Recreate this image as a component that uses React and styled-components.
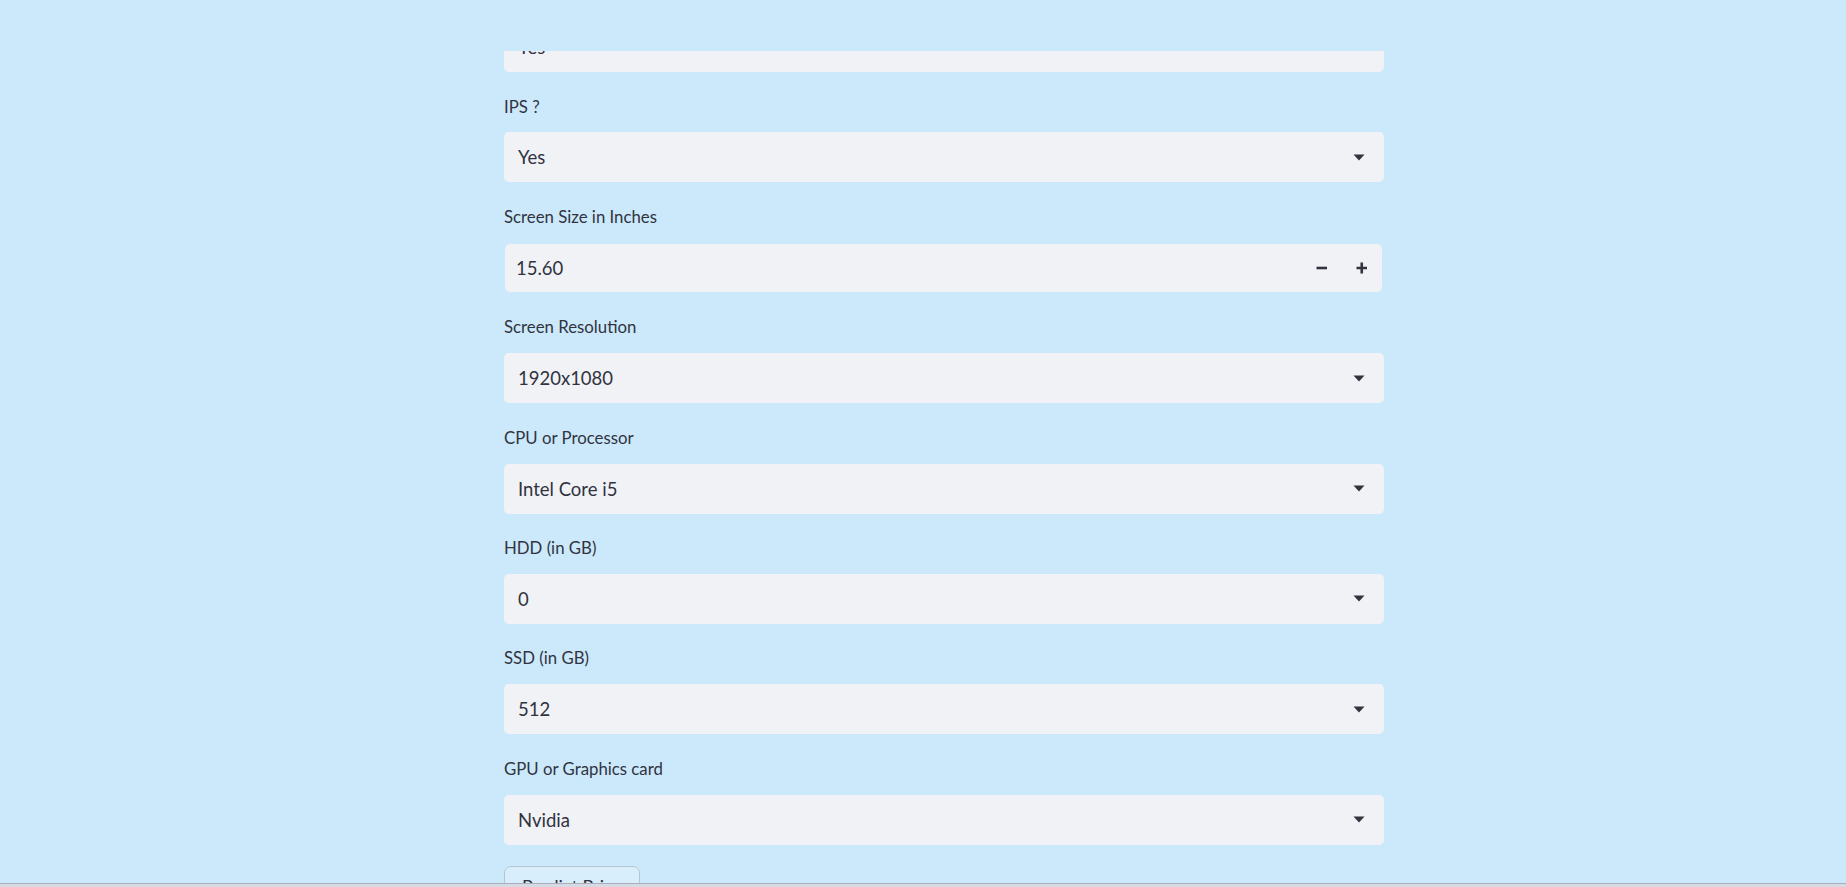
import React from "react";
import styled, { createGlobalStyle } from "styled-components";

const GlobalStyle = createGlobalStyle`
  html, body {
    margin: 0;
    padding: 0;
    height: 100%;
    overflow: hidden;
    background: #cbe9fb;
  }
  body {
    font-family: Lato, "Open Sans", "Liberation Sans", sans-serif;
    color: #31333f;
  }
`;

const fields = [
  { label: "IPS ?", value: "Yes" },
  { label: "Screen Size in Inches", value: "15.60", number: true },
  { label: "Screen Resolution", value: "1920x1080" },
  { label: "CPU or Processor", value: "Intel Core i5" },
  { label: "HDD (in GB)", value: "0" },
  { label: "SSD (in GB)", value: "512" },
  { label: "GPU or Graphics card", value: "Nvidia" },
];

function Caret() {
  return (
    <svg width="12" height="7" viewBox="0 0 12 7">
      <path d="M0.5 0.5 H11.5 L6 6.5 Z" fill="#31333f" />
    </svg>
  );
}

function MinusIcon() {
  return (
    <svg width="12" height="12" viewBox="0 0 12 12">
      <path d="M0.5 6 H11" stroke="#31333f" strokeWidth="2.6" />
    </svg>
  );
}

function PlusIcon() {
  return (
    <svg width="12" height="12" viewBox="0 0 12 12">
      <path d="M0.5 6 H11 M5.75 0.5 V11.5" stroke="#31333f" strokeWidth="2.6" />
    </svg>
  );
}

function SelectBox({ value }) {
  return (
    <Select>
      <SelectValue>{value}</SelectValue>
      <CaretSlot>
        <Caret />
      </CaretSlot>
    </Select>
  );
}

function NumberInput({ value }) {
  return (
    <NumberOuter>
      <NumberBox>
        <NumberValue>{value}</NumberValue>
        <StepButton>
          <MinusIcon />
        </StepButton>
        <StepButton>
          <PlusIcon />
        </StepButton>
      </NumberBox>
    </NumberOuter>
  );
}

export default function App() {
  return (
    <>
      <GlobalStyle />
      <Header />
      <Main>
        <Column>
          <SelectBox value="Yes" />
          {fields.map((f) => (
            <Widget key={f.label}>
              <Label>{f.label}</Label>
              {f.number ? (
                <NumberInput value={f.value} />
              ) : (
                <SelectBox value={f.value} />
              )}
            </Widget>
          ))}
          <PredictButton>Predict Price</PredictButton>
        </Column>
      </Main>
      <WindowEdge />
    </>
  );
}

const Header = styled.header`
  position: fixed;
  top: 0;
  left: 0;
  right: 0;
  height: 51px;
  background: #cbe9fb;
  z-index: 10;
`;

const Main = styled.main`
  height: 100vh;
  overflow: hidden;
  display: flex;
  align-items: flex-start;
  justify-content: center;
  padding-left: 42px;
  box-sizing: border-box;
`;

const Column = styled.div`
  width: 880px;
  flex-shrink: 0;
  padding-top: 22px;
  display: flex;
  flex-direction: column;
  gap: 21px;

  & > * {
    flex-shrink: 0;
  }
`;

const Widget = styled.div`
  display: flex;
  flex-direction: column;
`;

const Label = styled.label`
  height: 30px;
  box-sizing: border-box;
  padding-bottom: 4px;
  margin-bottom: 9.4px;
  display: flex;
  align-items: center;
  font-size: 16.8px;
  color: #31333f;
`;

const Select = styled.div`
  height: 50px;
  flex-shrink: 0;
  box-sizing: border-box;
  background: #f0f2f6;
  border-radius: 5px;
  display: flex;
  align-items: center;
  padding: 0 19px 0 14px;
`;

const SelectValue = styled.span`
  flex: 1;
  font-size: 18.5px;
  color: #31333f;
`;

const CaretSlot = styled.span`
  display: flex;
  align-items: center;
`;

const NumberOuter = styled.div`
  height: 50px;
  flex-shrink: 0;
  padding: 1px 2px 1px 1px;
  box-sizing: border-box;
`;

const NumberBox = styled.div`
  height: 100%;
  background: #f0f2f6;
  border-radius: 5px;
  display: flex;
  align-items: center;
  padding-left: 11px;
`;

const NumberValue = styled.span`
  flex: 1;
  font-size: 18.5px;
  color: #31333f;
`;

const StepButton = styled.span`
  width: 40px;
  height: 100%;
  display: flex;
  align-items: center;
  justify-content: center;
`;

const PredictButton = styled.button`
  align-self: flex-start;
  width: 136px;
  height: 48px;
  margin-top: 0.6px;
  box-sizing: border-box;
  background: #d8eefc;
  border: 1px solid #b9c6cf;
  border-radius: 7px;
  font-family: inherit;
  font-size: 18px;
  line-height: 1.6;
  color: #31333f;
  padding: 5px 14px;
  display: flex;
  align-items: flex-start;
  justify-content: center;
`;

const WindowEdge = styled.div`
  position: fixed;
  left: 0;
  right: 0;
  bottom: 0;
  height: 3px;
  border-top: 1px solid #a9aeb8;
  background: #d5dae4;
  z-index: 20;
`;
